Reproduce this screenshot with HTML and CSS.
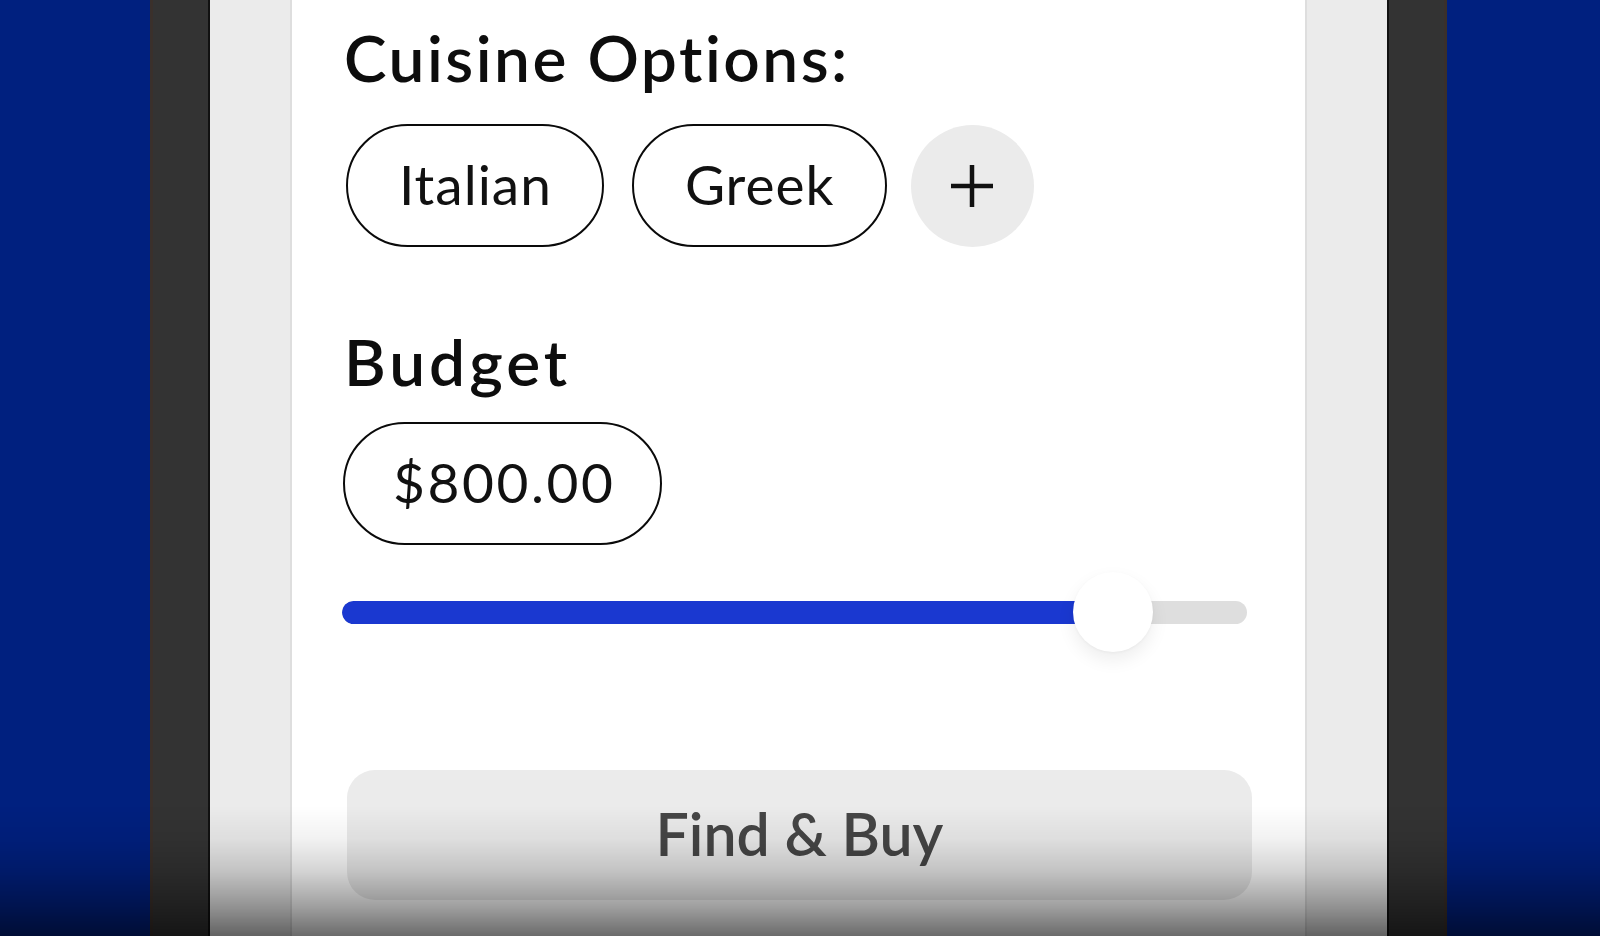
FILE: index.html
```html
<!DOCTYPE html>
<html lang="en">
<head>
<meta charset="utf-8">
<title>Cuisine Options</title>
<link rel="stylesheet" href="styles.css">
</head>
<body>
  <div class="phone">
    <div class="screen">
      <div class="card">
        <h2 class="section-title">Cuisine Options:</h2>
        <div class="chips">
          <span class="chip">Italian</span>
          <span class="chip">Greek</span>
          <button class="chip-add" aria-label="Add cuisine">
            <svg width="44" height="44" viewBox="0 0 44 44" aria-hidden="true">
              <path d="M22 1 V43 M1 22 H43" stroke="#111" stroke-width="4.5" fill="none" stroke-linecap="butt"/>
            </svg>
          </button>
        </div>
        <h2 class="section-title budget-title">Budget</h2>
        <div class="amount">$800.00</div>
        <div class="slider">
          <div class="track"><div class="fill" style="width:85.2%"></div></div>
          <div class="thumb" style="left:85.2%"></div>
        </div>
        <button class="cta">Find &amp; Buy</button>
      </div>
    </div>
  </div>
  <div class="fade"></div>
</body>
</html>
```

FILE: styles.css
```css
html, body {
  margin: 0;
  padding: 0;
  height: 100%;
}

body {
  background: #00207f;
  font-family: "Lato", "Noto Sans", sans-serif;
  color: #111;
  overflow: hidden;
  display: flex;
  justify-content: flex-start;
  padding-left: 150px;
  box-sizing: border-box;
}

.phone {
  width: 1297px;
  height: 100vh;
  box-sizing: border-box;
  background: #333333;
  border-left: 3px solid #3a302b;
  border-right: 3px solid #3a302b;
  padding: 0 55px;
  display: flex;
}

.screen {
  flex: 1;
  background: #ebebeb;
  border-left: 2px solid #111;
  border-right: 2px solid #111;
  padding: 0 80px;
  display: flex;
  overflow: hidden;
}

.card {
  flex: 1;
  background: #ffffff;
  border-left: 2px solid #dedede;
  border-right: 2px solid #dedede;
  border-bottom: 2px solid #dedede;
  border-radius: 0 0 44px 44px;
  min-height: 1000px;
  padding: 19px 58px 0 52px;
  box-sizing: border-box;
}

.section-title {
  margin: 0;
  font-size: 64px;
  line-height: 77px;
  font-weight: 600;
  color: #0d0d0d;
  letter-spacing: 2.5px;
}

.chips {
  display: flex;
  align-items: center;
  gap: 28px;
  margin-top: 28px;
  margin-left: 2px;
}

.chip {
  display: flex;
  align-items: center;
  justify-content: center;
  height: 123px;
  box-sizing: border-box;
  padding: 0 50px 3px 51px;
  border: 2px solid #0a0a0a;
  border-radius: 62px;
  font-size: 55px;
  line-height: 66px;
  letter-spacing: 1px;
  color: #111;
}

.chip-add {
  width: 123px;
  height: 122px;
  margin-left: -4px;
  border: none;
  border-radius: 50%;
  background: #ebebeb;
  display: flex;
  align-items: center;
  justify-content: center;
  padding: 0;
}

.budget-title {
  margin-top: 76px;
  letter-spacing: 4px;
}

.amount {
  display: inline-flex;
  align-items: center;
  height: 123px;
  box-sizing: border-box;
  margin-top: 22px;
  margin-left: -1px;
  padding: 0 44px 3px 48px;
  border: 2px solid #0a0a0a;
  border-radius: 62px;
  font-size: 55px;
  line-height: 66px;
  letter-spacing: 2.6px;
  color: #111;
}

.slider {
  position: relative;
  height: 80px;
  margin-top: 27px;
  margin-left: -2px;
  display: flex;
  align-items: center;
}

.track {
  flex: 1;
  height: 23px;
  border-radius: 12px;
  background: #dedede;
  overflow: hidden;
}

.fill {
  height: 100%;
  background: #1a38d0;
  border-radius: 12px 0 0 12px;
}

.thumb {
  position: absolute;
  top: 0;
  width: 80px;
  height: 80px;
  margin-left: -40px;
  border-radius: 50%;
  background: #ffffff;
  box-shadow: 0 8px 18px rgba(0, 0, 0, 0.07), 0 1px 3px rgba(0, 0, 0, 0.04);
}

.cta {
  display: flex;
  align-items: center;
  justify-content: center;
  width: calc(100% + 2px);
  height: 130px;
  margin-top: 118px;
  margin-left: 3px;
  border: none;
  border-radius: 28px;
  background: #ebebeb;
  font-family: "Lato", "Noto Sans", sans-serif;
  font-size: 59px;
  font-weight: 600;
  color: #464646;
  padding: 0 0 4px;
}

.fade {
  position: fixed;
  left: 0;
  right: 0;
  bottom: 0;
  height: 130px;
  pointer-events: none;
  background: linear-gradient(to bottom,
    rgba(0, 0, 0, 0) 0%,
    rgba(0, 0, 0, 0.05) 25%,
    rgba(0, 0, 0, 0.17) 50%,
    rgba(0, 0, 0, 0.38) 78%,
    rgba(0, 0, 0, 0.58) 100%);
}
```
